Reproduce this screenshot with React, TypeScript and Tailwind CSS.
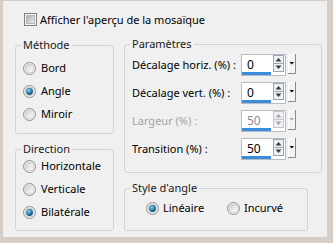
import React from "react";

const Radio = ({ checked }: { checked?: boolean }) => (
  <svg width="13" height="13" viewBox="0 0 13 13" className="shrink-0">
    <defs>
      <linearGradient id="radioBg" x1="0" y1="0" x2="1" y2="1">
        <stop offset="0" stopColor="#cfcfcf" />
        <stop offset="1" stopColor="#ffffff" />
      </linearGradient>
      <radialGradient id="radioDot" cx="0.4" cy="0.35" r="0.7">
        <stop offset="0" stopColor="#8fd6f7" />
        <stop offset="0.55" stopColor="#2a7fb0" />
        <stop offset="1" stopColor="#0c3d5e" />
      </radialGradient>
    </defs>
    <circle cx="6.5" cy="6.5" r="6" fill="#f6f6f6" stroke="#8e8f8f" />
    <circle cx="6.5" cy="6.5" r="4.4" fill="url(#radioBg)" stroke="#c4c4c4" strokeWidth="0.8" />
    {checked && <circle cx="6.5" cy="6.5" r="3.4" fill="url(#radioDot)" />}
  </svg>
);

const Checkbox = () => (
  <svg width="13" height="13" viewBox="0 0 13 13" className="shrink-0">
    <defs>
      <linearGradient id="cbInner" x1="0" y1="0" x2="1" y2="1">
        <stop offset="0" stopColor="#a9abae" />
        <stop offset="1" stopColor="#f0f0f0" />
      </linearGradient>
    </defs>
    <rect x="0.5" y="0.5" width="12" height="12" fill="#f7f7f7" stroke="#7e7f80" />
    <rect x="2.5" y="2.5" width="8" height="8" fill="url(#cbInner)" stroke="#b5b6b8" />
  </svg>
);

const Spin = ({ value, disabled }: { value: string; disabled?: boolean }) => {
  const arrow = disabled ? "#a8a8a8" : "#3a3a3a";
  return (
    <div className="flex items-start gap-[2px]">
      <div className="flex h-[22px] w-[45px] border border-[#b8bcc2] bg-white">
        <div className="flex w-[29px] flex-col">
          <div className={`h-[17px] pl-[5px] text-[12px] leading-[19px] ${disabled ? "text-[#8d8d8d]" : "text-black"}`}>{value}</div>
          <div className="h-[3px] bg-[#3b8cdc]" />
        </div>
        <svg width="11" height="17" viewBox="0 0 11 17" className="ml-[2px]">
          <rect x="0.5" y="0.5" width="10" height="16" fill="#eef2f6" stroke={disabled ? "#c4c8cc" : "#9aa6b3"} />
          <line x1="0.5" y1="8.5" x2="10.5" y2="8.5" stroke={disabled ? "#c4c8cc" : "#9aa6b3"} />
          <path d="M2.5 6.5 L5.5 3 L8.5 6.5 Z" fill={arrow} />
          <path d="M2.5 10.5 L5.5 14 L8.5 10.5 Z" fill={arrow} />
        </svg>
      </div>
      <svg width="8" height="20" viewBox="0 0 8 20">
        <rect x="0" y="0" width="8" height="20" fill="#f3f3f3" />
        <path d="M0.5 20 V0.5 H7" stroke="#ffffff" fill="none" />
        <path d="M7.5 0 V19.5 H0" stroke="#8a8a8a" fill="none" />
        <path d="M1.5 8 L6 8 L3.75 10.5 Z" fill={disabled ? "#a8a8a8" : "#000"} />
      </svg>
    </div>
  );
};

const Legend = ({ children }: { children: React.ReactNode }) => (
  <legend className="-ml-[2px] whitespace-nowrap px-[2px] text-[11px] leading-[16px] text-[#1a1a1a]">{children}</legend>
);

const RadioRow = ({ label, checked }: { label: string; checked?: boolean }) => (
  <div className="flex h-[23px] items-center gap-[5px]">
    <Radio checked={checked} />
    <span className="whitespace-nowrap">{label}</span>
  </div>
);

const ParamRow = ({ label, value, disabled }: { label: string; value: string; disabled?: boolean }) => (
  <div className="flex h-[22px] items-center">
    <span className={`w-[109px] whitespace-nowrap ${disabled ? "text-[#a3a3a3]" : "text-black"}`}>{label}</span>
    <Spin value={value} disabled={disabled} />
  </div>
);

export default function App() {
  return (
    <div className="h-[243px] w-[333px] bg-[#d6cec6] pb-[6px] pl-[3px] pr-[6px] pt-[1px] font-['Noto_Sans',sans-serif] text-[11px] text-black">
      <div className="flex h-full w-full flex-col bg-[#f0f0f0]">
        <div className="ml-[21px] mt-[12px] flex h-[13px] items-center gap-[3px]">
          <Checkbox />
          <span className="whitespace-nowrap leading-[13px]">Afficher l'aperçu de la mosaïque</span>
        </div>

        <div className="ml-[12px] mt-[11px] flex gap-[10px]">
          <div className="flex w-[99px] flex-col gap-[7px]">
            <fieldset className="h-[97px] rounded-[3px] border border-[#d3d3d3] pl-[7px]">
              <Legend>Méthode</Legend>
              <div className="mt-[4px] flex flex-col">
                <RadioRow label="Bord" />
                <RadioRow label="Angle" checked />
                <RadioRow label="Miroir" />
              </div>
            </fieldset>
            <fieldset className="h-[90px] rounded-[3px] border border-[#d3d3d3] pl-[7px]">
              <Legend>Direction</Legend>
              <div className="-mt-[2px] flex flex-col">
                <RadioRow label="Horizontale" />
                <RadioRow label="Verticale" />
                <RadioRow label="Bilatérale" checked />
              </div>
            </fieldset>
          </div>

          <div className="-mt-[1px] flex flex-col">
            <fieldset className="h-[137px] w-[198px] rounded-[3px] border border-[#d3d3d3] pl-[7px]">
              <Legend>Paramètres</Legend>
              <div className="mt-[2px] flex flex-col gap-[6px]">
                <ParamRow label="Décalage horiz. (%) :" value="0" />
                <ParamRow label="Décalage vert. (%) :" value="0" />
                <ParamRow label="Largeur (%) :" value="50" disabled />
                <ParamRow label="Transition (%) :" value="50" />
              </div>
            </fieldset>
            <fieldset className="mt-[7px] h-[51px] w-[184px] rounded-[3px] border border-[#d3d3d3] pl-[7px]">
              <Legend>Style d'angle</Legend>
              <div className="ml-[14px] mt-[1px] flex h-[23px] items-center">
                <div className="flex w-[81px] items-center gap-[4px]">
                  <Radio checked />
                  <span>Linéaire</span>
                </div>
                <div className="flex items-center gap-[4px]">
                  <Radio />
                  <span>Incurvé</span>
                </div>
              </div>
            </fieldset>
          </div>
        </div>
      </div>
    </div>
  );
}
